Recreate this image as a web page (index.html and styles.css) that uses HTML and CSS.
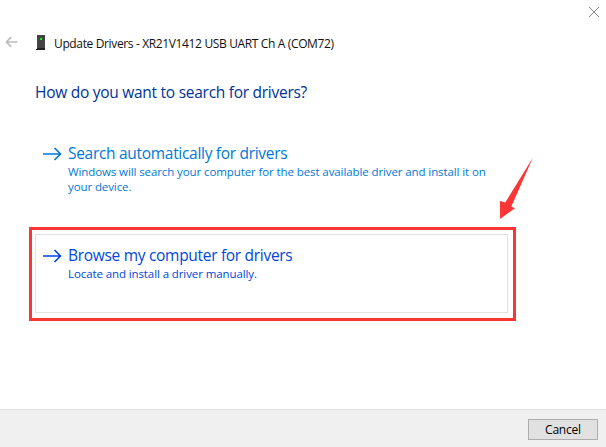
FILE: index.html
```html
<!DOCTYPE html>
<html lang="en">
<head>
<meta charset="utf-8">
<title>Update Drivers</title>
<link rel="stylesheet" href="styles.css">
</head>
<body>
<main class="dialog">
  <div class="caption">
    <svg class="close" width="12" height="12" viewBox="0 0 12 12"><path d="M1 1L11 11M11 1L1 11"/></svg>
  </div>
  <header class="header">
    <svg class="back" width="13" height="12" viewBox="0 0 13 12"><path d="M12.5 6H1.5M6.2 1.2L1.4 6L6.2 10.8"/></svg>
    <svg class="device" width="10" height="16" viewBox="0 0 10 16"><path fill="#444" d="M1 0h8v13H1z"/><path fill="#222" d="M1 13h8v2H1z"/><path fill="#222" d="M0 14h9v1H0z"/><path fill="#20f020" d="M4 3h2v2H4z"/></svg>
    <span class="title">Update Drivers - XR21V1412 USB UART Ch A (COM72)</span>
  </header>
  <section class="content">
    <h1 class="question">How do you want to search for drivers?</h1>
    <div class="option">
      <svg class="arrow" width="19" height="14" viewBox="0 0 19 14"><path d="M0 7H17.5M11.5 1L17.5 7L11.5 13"/></svg>
      <div class="text">
        <h2 class="name">Search automatically for drivers</h2>
        <p class="desc">Windows will search your computer for the best available driver and install it on<br>your device.</p>
      </div>
    </div>
    <div class="highlight">
      <div class="option active">
        <svg class="arrow" width="19" height="14" viewBox="0 0 19 14"><path d="M0 7H17.5M11.5 1L17.5 7L11.5 13"/></svg>
        <div class="text">
          <h2 class="name">Browse my computer for drivers</h2>
          <p class="desc">Locate and install a driver manually.</p>
        </div>
      </div>
    </div>
  </section>
  <footer class="footer"><button class="cancel">Cancel</button></footer>
  <svg class="pointer" width="34" height="63" viewBox="0 0 34 63"><path d="M33 .5L11.3 49.5L15 51.3L0 62V44L5.3 45.5Z"/></svg>
</main>
</body>
</html>
```
FILE: styles.css
```css
* { box-sizing: border-box; }
body { margin: 0; font-family: "Open Sans", "Noto Sans", sans-serif; background: #fff; }
.dialog { position: relative; width: 606px; height: 447px; display: flex; flex-direction: column; overflow: hidden; white-space: nowrap; }
svg { display: block; flex: none; fill: none; }
.caption { height: 33px; padding: 6px 6px 0 0; display: flex; justify-content: flex-end; }
.close { stroke: #858585; stroke-width: 1; }
.header { height: 20px; display: flex; align-items: center; padding-left: 5px; }
.back { stroke: #bdbdbd; stroke-width: 1.7; margin: -2px 18px 0 0; }
.device { margin-right: 8px; }
.title { font-size: 12px; color: #111; letter-spacing: -.36px; }
.content { flex: 1; padding: 28px 0 0 29px; }
.question { margin: 0 0 0 6px; font-size: 15.5px; font-weight: 400; line-height: 22px; color: #003399; letter-spacing: -.27px; }
.option { display: flex; width: 473px; height: 79px; margin: 29px 0 0 6px; border: 1px solid transparent; padding: 10px 0 0 7px; color: #0078d7; }
.arrow { stroke: currentColor; stroke-width: 1.6; margin: 4px 6px 0 0; }
.name { margin: 0; font-size: 15.5px; font-weight: 400; line-height: 20px; letter-spacing: -.3px; }
.desc { margin: 1px 0 0; font-size: 11.5px; line-height: 15px; letter-spacing: -.1px; }
.highlight { width: 487px; height: 94px; border: 3px solid #fc3535; margin-top: 16px; padding: 4px 3px; }
.active { margin: 0; border-color: #e1e1e1; color: #0046e0; }
.footer { height: 38px; border-top: 1px solid #dfdfdf; background: #f0f0f0; display: flex; justify-content: flex-end; padding: 9px 8px 0 0; }
.cancel { width: 70px; height: 21px; padding: 0; border: 1px solid #adadad; border-radius: 0; background: #e1e1e1; color: #000; font-family: inherit; font-size: 12px; letter-spacing: -.2px; line-height: 19px; }
.pointer { position: absolute; left: 500px; top: 157px; fill: #fc3535; }
```
